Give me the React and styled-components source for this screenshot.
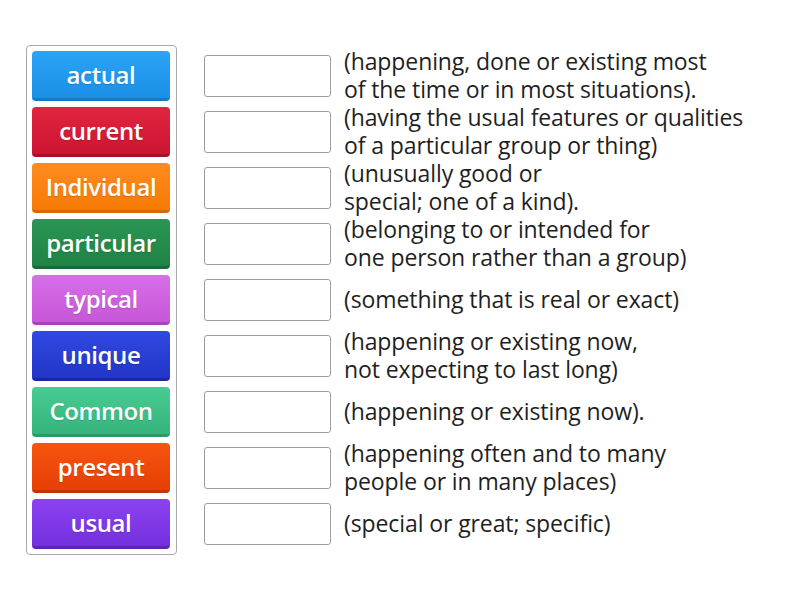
import React from "react";
import styled, { createGlobalStyle } from "styled-components";

const Global = createGlobalStyle`
  html, body { margin: 0; padding: 0; background: #fff; }
  body { font-family: "Open Sans", "Noto Sans", sans-serif; }
`;

const Page = styled.div`
  width: 800px;
  height: 600px;
  box-sizing: border-box;
  padding: 45px 0 0 26px;
  display: flex;
  align-items: flex-start;
`;

const Bank = styled.div`
  box-sizing: border-box;
  width: 151px;
  padding: 5px 6px 5px 5px;
  border: 1px solid #a9a9a9;
  border-radius: 4px;
  display: flex;
  flex-direction: column;
  gap: 6px;
`;

const Tile = styled.div`
  height: 50px;
  box-sizing: border-box;
  border-radius: 4px;
  background: linear-gradient(${(p) => p.$top}, ${(p) => p.$bottom});
  border-bottom: 3px solid ${(p) => p.$edge};
  color: #fff;
  font-family: "Open Sans", sans-serif;
  font-size: 24px;
  font-weight: 600;
  display: flex;
  align-items: center;
  justify-content: center;
  letter-spacing: -0.4px;
  text-shadow: 0 1px 1px rgba(0, 0, 0, 0.15);
`;

const Rows = styled.div`
  display: flex;
  flex-direction: column;
  gap: 6px;
  padding-top: 6px;
  margin-left: 27px;
`;

const Row = styled.div`
  height: 50px;
  display: flex;
  align-items: center;
  gap: 13px;
`;

const Box = styled.div`
  width: 127px;
  height: 42px;
  flex: none;
  box-sizing: border-box;
  border: 1px solid #9e9e9e;
  border-radius: 3px;
  background: #fff;
`;

const Def = styled.div`
  font-family: "Open Sans", sans-serif;
  font-size: 23px;
  line-height: 28px;
  color: #1f1f1f;
  white-space: pre-line;
  letter-spacing: -0.1px;
  margin-top: -2px;
`;

const tiles = [
  ["actual", "#2aa4f6", "#1b8fe6", "#1479c8"],
  ["current", "#e2253f", "#cc1431", "#a90e27"],
  ["Individual", "#ff8b1f", "#f77a05", "#d96800"],
  ["particular", "#2a9556", "#1f8345", "#176b37"],
  ["typical", "#d86ee8", "#c657d8", "#a843ba"],
  ["unique", "#3049e2", "#2235c8", "#1a28a8"],
  ["Common", "#48cc93", "#36b47c", "#2a9a68"],
  ["present", "#f7550f", "#e53f05", "#c23400"],
  ["usual", "#8c42f2", "#7430dc", "#5f22bc"],
];

const defs = [
  "(happening, done or existing most\nof the time or in most situations).",
  "(having the usual features or qualities\nof a particular group or thing)",
  "(unusually good or\nspecial; one of a kind).",
  "(belonging to or intended for\none person rather than a group)",
  "(something that is real or exact)",
  "(happening or existing now,\nnot expecting to last long)",
  "(happening or existing now).",
  "(happening often and to many\npeople or in many places)",
  "(special or great; specific)",
];

export default function App() {
  return (
    <>
      <Global />
      <Page>
        <Bank>
          {tiles.map(([t, a, b, e]) => (
            <Tile key={t} $top={a} $bottom={b} $edge={e}>
              {t}
            </Tile>
          ))}
        </Bank>
        <Rows>
          {defs.map((d, i) => (
            <Row key={i}>
              <Box />
              <Def>{d}</Def>
            </Row>
          ))}
        </Rows>
      </Page>
    </>
  );
}
